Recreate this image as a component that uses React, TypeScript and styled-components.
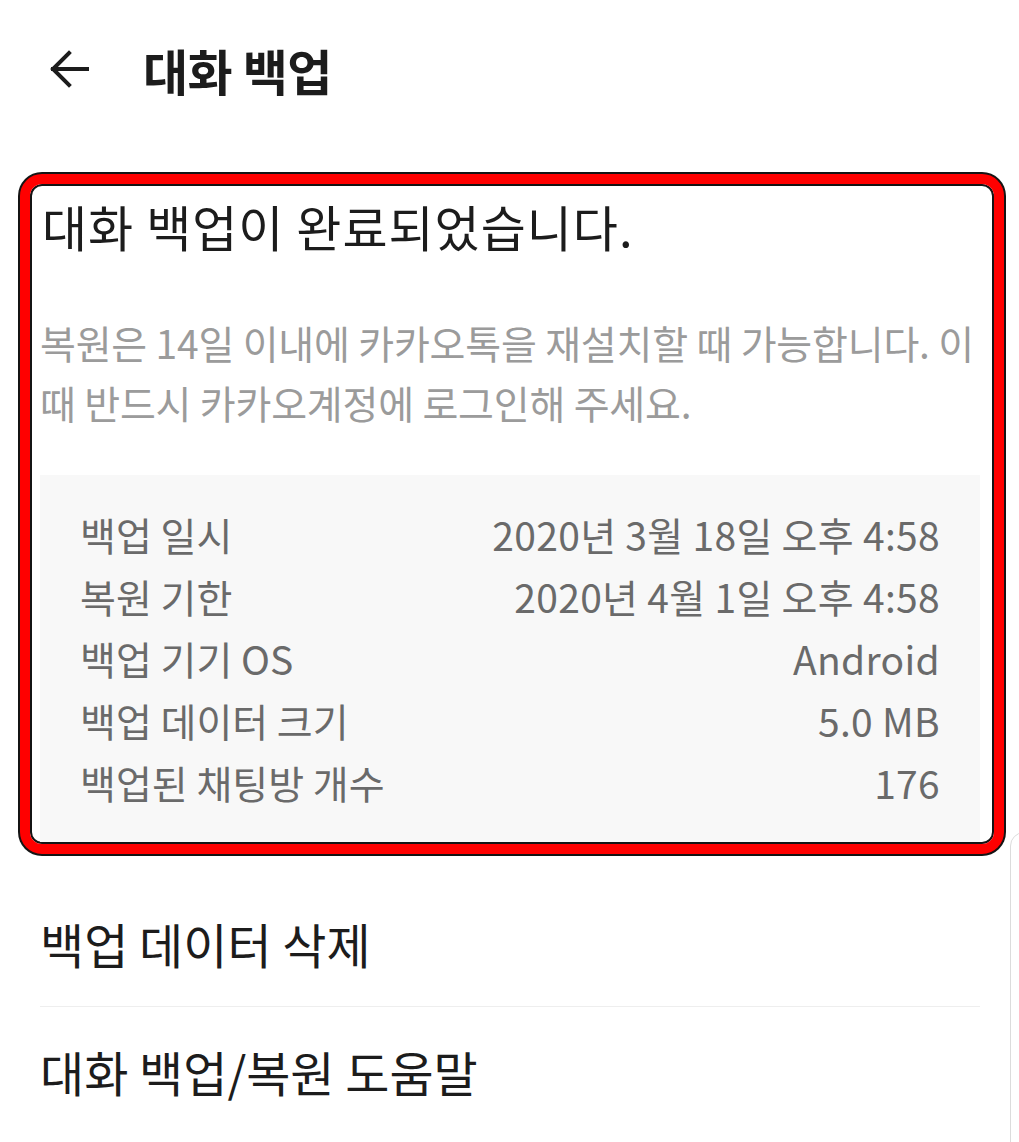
import * as React from 'react';
import styled, { createGlobalStyle } from 'styled-components';

const GlobalStyle = createGlobalStyle`
  html, body {
    margin: 0;
    padding: 0;
    background: #ffffff;
  }
  body {
    font-family: "Noto Sans CJK KR", "Noto Sans", sans-serif;
    color: #1c1c1c;
  }
`;

const Page = styled.div`
  position: relative;
  width: 1019px;
  height: 1142px;
  overflow: hidden;
  background: #ffffff;
`;

const TopBar = styled.header`
  display: flex;
  align-items: center;
  height: 138px;
  padding-left: 48px;
  box-sizing: border-box;
`;

const BackButton = styled.button`
  display: flex;
  align-items: center;
  justify-content: center;
  width: 42px;
  height: 42px;
  padding: 0;
  margin: 0 53px 0 0;
  border: none;
  background: none;
  color: #1c1c1c;
`;

const PageTitle = styled.h1`
  margin: 0;
  font-size: 49px;
  font-weight: 700;
  letter-spacing: -0.5px;
  color: #1c1c1c;
`;

// highlighted card: red frame outlined in black
const ResultCard = styled.section`
  margin: 36px 15px 0 20px;
  border: 10px solid #ff0000;
  border-radius: 22px;
  box-shadow: 0 0 0 2px #141414, inset 0 0 0 2px #141414;
  background: #ffffff;
  overflow: hidden;
  padding: 10px 14px 2px 10px;
`;

const CardTitle = styled.h2`
  margin: 0 0 0 2px;
  font-size: 49px;
  font-weight: 400;
  line-height: 64px;
  letter-spacing: 1px;
  color: #1c1c1c;
`;

const Notice = styled.p`
  margin: 54px 0 0 0;
  font-size: 39px;
  line-height: 60px;
  color: #9b9b9b;
  white-space: nowrap;
  letter-spacing: -0.2px;
`;

const InfoPanel = styled.div`
  margin-top: 43px;
  background: #f8f8f8;
  padding: 28px 40px 29px 40px;
  display: flex;
  flex-direction: column;
`;

const InfoRow = styled.div`
  display: flex;
  justify-content: space-between;
  align-items: center;
  height: 62px;
  font-size: 39px;
  color: #6a6a6a;
`;

const InfoLabel = styled.span``;
const InfoValue = styled.span`
  text-align: right;
  letter-spacing: 0.3px;
`;

const MenuList = styled.ul`
  list-style: none;
  margin: 25px 39px 0 40px;
  padding: 0;
`;

const MenuItem = styled.li<{ divided?: boolean }>`
  display: flex;
  align-items: center;
  height: 128px;
  font-size: 48px;
  color: #1c1c1c;
  border-bottom: ${(p) => (p.divided ? '1px solid #eeeeee' : 'none')};
  box-sizing: border-box;
`;

// edge of a floating sheet peeking in on the right
const SideSheet = styled.div`
  position: absolute;
  left: 1010px;
  top: 832px;
  width: 60px;
  height: 400px;
  border: 1px solid #dcdcdc;
  border-radius: 14px;
  background: #ffffff;
`;

const infoRows = [
  { label: '백업 일시', value: '2020년 3월 18일 오후 4:58' },
  { label: '복원 기한', value: '2020년 4월 1일 오후 4:58' },
  { label: '백업 기기 OS', value: 'Android' },
  { label: '백업 데이터 크기', value: '5.0 MB' },
  { label: '백업된 채팅방 개수', value: '176' },
];

const BackArrow = () => (
  <svg width="40" height="40" viewBox="0 0 40 40" fill="none">
    <path
      d="M38 20H4M20 4L4 20L20 36"
      stroke="#1c1c1c"
      strokeWidth="4"
      strokeLinecap="square"
    />
  </svg>
);

const App = () => {
  return (
    <Page>
      <GlobalStyle />
      <TopBar>
        <BackButton>
          <BackArrow />
        </BackButton>
        <PageTitle>대화 백업</PageTitle>
      </TopBar>
      <ResultCard>
        <CardTitle>대화 백업이 완료되었습니다.</CardTitle>
        <Notice>
          복원은 14일 이내에 카카오톡을 재설치할 때 가능합니다. 이
          <br />
          때 반드시 카카오계정에 로그인해 주세요.
        </Notice>
        <InfoPanel>
          {infoRows.map((r) => (
            <InfoRow key={r.label}>
              <InfoLabel>{r.label}</InfoLabel>
              <InfoValue>{r.value}</InfoValue>
            </InfoRow>
          ))}
        </InfoPanel>
      </ResultCard>
      <MenuList>
        <MenuItem divided>백업 데이터 삭제</MenuItem>
        <MenuItem>대화 백업/복원 도움말</MenuItem>
      </MenuList>
      <SideSheet />
    </Page>
  );
};

export default App;
